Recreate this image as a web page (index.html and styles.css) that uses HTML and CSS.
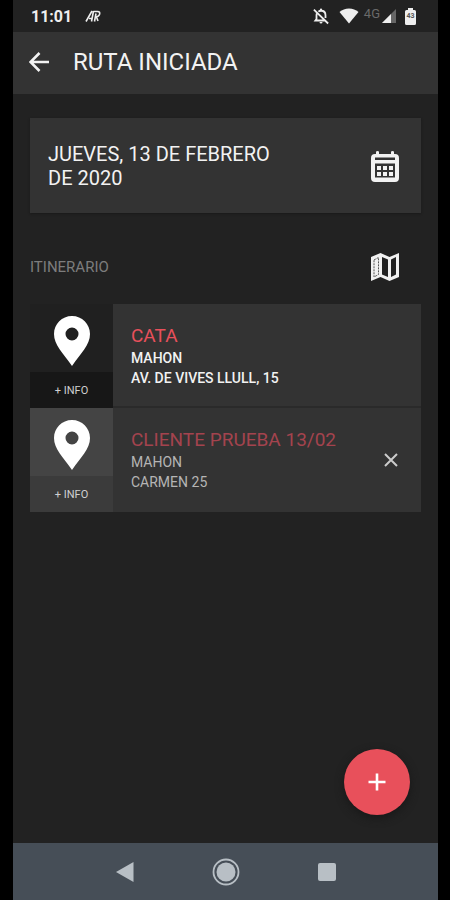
FILE: index.html
```html
<!DOCTYPE html>
<html lang="es">
<head>
<meta charset="utf-8">
<meta name="viewport" content="width=device-width, initial-scale=1">
<title>Ruta iniciada</title>
<link rel="stylesheet" href="styles.css">
</head>
<body>
<div class="phone">
  <div class="status">
    <span class="clock">11:01</span>
    <svg class="app-mark" width="16" height="12" viewBox="0 0 16 12" aria-hidden="true"><path d="M1 11.500L7 1M6.500 11.500L8.500 1M4 8.500H7M8.500 1.500H12.500Q15.500 1.500 14.500 4.500Q13.500 7 10 7M11 3.500L9.500 11.500M11.500 7L13 11" fill="none" stroke="currentColor" stroke-width="1.600"/></svg>
    <div class="status-icons">
      <svg width="18" height="18" viewBox="0 0 24 24" aria-hidden="true"><path d="M6.500 8.500C6 9.500 6 10 6 11V16L4.500 18H17M8.500 6.200Q10 5 12 5Q18 5 18 11V14.500M2.500 3.500L21.500 22" fill="none" stroke="currentColor" stroke-width="2.400"/><path d="M10.500 5V3.500a1.500 1.500 0 0 1 3 0V5zM10 20h4a2 2 0 0 1-4 0z" fill="currentColor"/></svg>
      <svg class="wifi" width="20" height="16" viewBox="0 0 20 16" aria-hidden="true"><path d="M10 15.500L.500 4Q4.500.500 10 .500T19.500 4z" fill="currentColor"/></svg>
      <span class="network">4G</span>
      <svg width="14" height="14" viewBox="0 0 14 14" aria-hidden="true"><path d="M0 14L14 0V14z" fill="#666"/><path d="M0 14L9 5V14z" fill="currentColor"/></svg>
      <svg class="battery" width="11" height="17" viewBox="0 0 11 17" aria-hidden="true"><path d="M3 0H8V2H9.500Q11 2 11 3.500V15.500Q11 17 9.500 17H1.500Q0 17 0 15.500V3.500Q0 2 1.500 2H3z" fill="currentColor"/><text x="5.500" y="10" text-anchor="middle" class="charge">43</text></svg>
    </div>
  </div>
  <header class="appbar">
    <button class="icon-button" aria-label="Volver"><svg width="20" height="20" viewBox="0 0 20 20"><path d="M20 10H2M10.500 1L1.500 10L10.500 19" fill="none" stroke="currentColor" stroke-width="2.600"/></svg></button>
    <h1>RUTA INICIADA</h1>
  </header>
  <main>
    <section class="date-card">
      <h2>JUEVES, 13 DE FEBRERO DE 2020</h2>
      <button class="icon-button" aria-label="Elegir fecha"><svg width="28" height="32" viewBox="0 0 28 32"><path fill="currentColor" fill-rule="evenodd" d="M5 2Q5 1 6.500 1T8 2V4H20V2Q20 1 21.500 1T23 2V4H24Q28 4 28 8V28Q28 32 24 32H4Q0 32 0 28V8Q0 4 4 4H5zM4 7.500V10H24V7.500zM4 13.500V27.500H24V13.500z"/><path fill="currentColor" d="M6 16h4v4H6zM12 16h4v4h-4zM18 16h4v4h-4zM6 22h4v4H6zM12 22h4v4h-4zM18 22h4v4h-4z"/></svg></button>
    </section>
    <div class="list-head">
      <h3>ITINERARIO</h3>
      <button class="icon-button" aria-label="Ver mapa"><svg width="28" height="28" viewBox="0 0 28 28"><path fill="currentColor" fill-rule="evenodd" d="M0 4L9.500 0L18.500 4L28 0V24L18.500 28L9.500 24L0 28zM11 4V21.500L17 24V6.500zM20 6.500V24L25 21.500V4z"/><path d="M3 7L7.500 4.500V21.500L3 24z" fill="none" stroke="#555" stroke-dasharray="2 1"/></svg></button>
    </div>
    <ul class="stops">
      <li class="stop">
        <button class="side"><span class="pin"><svg width="36" height="50" viewBox="0 0 36 50"><path fill="currentColor" fill-rule="evenodd" d="M18 0C28 0 36 8 36 18C36 29 27 37 18 50C9 37 0 29 0 18C0 8 8 0 18 0zM18 11.500a6.500 6.500 0 1 0 0 13a6.500 6.500 0 1 0 0-13z"/></svg></span><span class="info">+ INFO</span></button>
        <div class="details"><h4>CATA</h4><p>MAHON</p><p>AV. DE VIVES LLULL, 15</p></div>
      </li>
      <li class="stop muted">
        <button class="side"><span class="pin"><svg width="36" height="50" viewBox="0 0 36 50"><path fill="currentColor" fill-rule="evenodd" d="M18 0C28 0 36 8 36 18C36 29 27 37 18 50C9 37 0 29 0 18C0 8 8 0 18 0zM18 11.500a6.500 6.500 0 1 0 0 13a6.500 6.500 0 1 0 0-13z"/></svg></span><span class="info">+ INFO</span></button>
        <div class="details"><h4>CLIENTE PRUEBA 13/02</h4><p>MAHON</p><p>CARMEN 25</p></div>
        <button class="icon-button remove" aria-label="Quitar"><svg width="14" height="14" viewBox="0 0 14 14"><path d="M1 1L13 13M13 1L1 13" fill="none" stroke="currentColor" stroke-width="2"/></svg></button>
      </li>
    </ul>
    <button class="fab" aria-label="Añadir"><svg width="18" height="18" viewBox="0 0 18 18"><path d="M9 .500V17.500M.500 9H17.500" stroke="currentColor" stroke-width="2.600"/></svg></button>
  </main>
  <nav class="navbar">
    <button class="icon-button" aria-label="Atrás"><svg width="18" height="20" viewBox="0 0 18 20"><path d="M0 10L17.500 0V20z" fill="currentColor"/></svg></button>
    <button class="icon-button" aria-label="Inicio"><svg width="28" height="28" viewBox="0 0 28 28"><circle cx="14" cy="14" r="12.500" fill="none" stroke="currentColor" stroke-width="1.800"/><circle cx="14" cy="14" r="9.500" fill="currentColor"/></svg></button>
    <button class="icon-button" aria-label="Recientes"><svg width="18" height="18" viewBox="0 0 18 18"><rect width="18" height="18" rx="2" fill="currentColor"/></svg></button>
  </nav>
</div>
</body>
</html>
```
FILE: styles.css
```css
* { box-sizing: border-box; }
body { margin: 0; background: #000; font-family: Roboto, "Liberation Sans", sans-serif; color: #f2f2f2; }
h1, h2, h3, h4, p, ul { margin: 0; padding: 0; font-weight: 400; }
svg { display: block; flex: none; }
button { border: 0; padding: 0; background: none; color: inherit; font: inherit; }
.icon-button { display: flex; align-items: center; justify-content: center; flex: none; }

.phone { min-height: 100vh; margin: 0 12px 0 13px; background: #222; display: flex; flex-direction: column; }

.status { height: 32px; padding: 0 22px 0 18px; display: flex; align-items: center; color: #eee; }
.clock { font-size: 16px; font-weight: 700; }
.app-mark { margin-left: 13px; }
.status-icons { margin-left: auto; display: flex; align-items: center; }
.wifi { margin-left: 9px; }
.network { margin: 0 2px 4px 5px; font-size: 13px; line-height: 16px; color: #6a6a6a; }
.battery { margin-left: 9px; }
.charge { font-size: 7px; font-weight: 700; fill: #555; }

.appbar { height: 62px; padding: 0 16px 2px; display: flex; align-items: center; gap: 24px; background: #333; }
h1 { font-size: 24px; line-height: 28px; }

main { flex: 1; padding: 24px 17px 0; display: flex; flex-direction: column; }
.date-card { min-height: 95px; padding: 0 22px 0 18px; display: flex; align-items: center; justify-content: space-between; background: #333; box-shadow: 0 1px 2px #1a1a1a; }
h2 { max-width: 250px; font-size: 20px; line-height: 24px; }
.list-head { height: 91px; padding: 17px 22px 0 0; display: flex; align-items: center; justify-content: space-between; }
h3 { font-size: 15px; color: #7d7d7d; }

.stops { list-style: none; }
.stop { display: flex; align-items: stretch; min-height: 104px; background: #333; }
.side { width: 83px; flex: none; display: flex; flex-direction: column; background: #202020; color: #fff; }
.pin { width: 100%; height: 68px; display: flex; align-items: center; justify-content: center; padding-top: 6px; }
.info { flex: 1; width: 100%; display: flex; align-items: center; justify-content: center; background: #171717; color: #d0d0d0; font-size: 11px; }
.details { flex: 1; padding: 20px 0 0 18px; font-size: 14px; line-height: 20px; border-bottom: 2px solid #2a2a2a; }
.details p { font-weight: 500; }
h4 { font-size: 19px; line-height: 24px; color: #e8505b; }
.muted .details { border-bottom: 0; }
.muted .side { background: #444; }
.muted .info { background: #3b3b3b; }
.muted p { font-weight: 400; color: #b5b5b5; }
.muted h4 { color: #a4434e; }
.remove { padding-right: 23px; color: #ccc; }

.fab { width: 66px; height: 66px; margin: auto 11px 28px auto; display: flex; align-items: center; justify-content: center; border-radius: 50%; background: #e8505b; color: #fff; box-shadow: 0 3px 8px #181818; }

.navbar { height: 57px; display: flex; align-items: center; justify-content: center; gap: 78px; background: #464e57; color: #b8bfc5; }
```
